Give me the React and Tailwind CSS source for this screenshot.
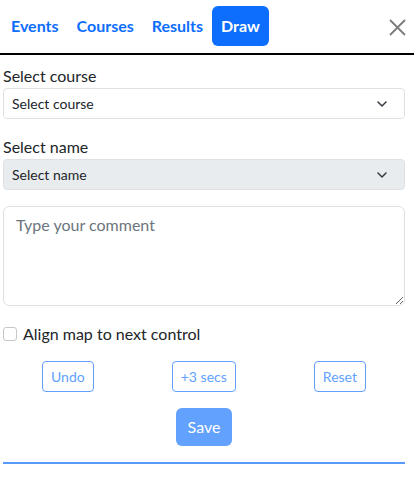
import React, { useState } from 'react'

// Draw panel: tabs on top, course/name selects, comment box and the draw controls

const tabs = ['Events', 'Courses', 'Results', 'Draw']

const Chevron = () => (
  <svg width="10" height="6" viewBox="0 0 10 6" className="pointer-events-none absolute right-[18px] top-1/2 -translate-y-1/2">
    <path d="M1 1l4 4 4-4" fill="none" stroke="#343a40" strokeWidth="1.5" strokeLinecap="round" strokeLinejoin="round" />
  </svg>
)

export default function App() {
  const [tab, setTab] = useState('Draw')
  const [comment, setComment] = useState('')
  const [align, setAlign] = useState(false)

  return (
    <div className="w-[414px] min-h-[483px] bg-white text-[#212529]" style={{ fontFamily: 'Lato, "Noto Sans", sans-serif' }}>
      {/* tabs */}
      <div className="flex items-center pt-[6px] pb-[7px] pl-[2px] pr-[8px] border-b-2 border-black">
        {tabs.map(t => (
          <button
            key={t}
            onClick={() => setTab(t)}
            className={`h-[40px] px-[9px] rounded-md text-[16px] font-bold ${tab === t ? 'bg-[#0d6efd] text-white' : 'text-[#0d6efd]'}`}
          >
            {t}
          </button>
        ))}
        <button className="ml-auto w-[17px] h-[17px] mt-[2px]">
          <svg width="17" height="17" viewBox="0 0 17 17">
            <path d="M1 1l15 15M16 1L1 16" stroke="#7b7b7b" strokeWidth="1.8" />
          </svg>
        </button>
      </div>

      <div className="pl-[3px] pr-[9px] pt-[9px]">
        <label className="block text-[16px] leading-6">Select course</label>
        <div className="relative">
          <select className="w-full h-[31px] pl-2 pr-8 text-[14px] border border-[#dee2e6] rounded-[4px] bg-white appearance-none">
            <option>Select course</option>
          </select>
          <Chevron />
        </div>

        <label className="block text-[16px] leading-6 mt-4">Select name</label>
        <div className="relative">
          <select disabled className="w-full h-[31px] pl-2 pr-8 text-[14px] text-[#212529] border border-[#dee2e6] rounded-[4px] bg-[#e9ecef] appearance-none">
            <option>Select name</option>
          </select>
          <Chevron />
        </div>

        <textarea
          value={comment}
          onChange={e => setComment(e.target.value)}
          placeholder="Type your comment"
          className="block w-full h-[100px] mt-4 px-3 py-[6px] text-[16px] leading-6 border border-[#dee2e6] rounded-md placeholder:text-[#6c757d] outline-none"
        />

        <label className="flex items-center mt-4 h-6 text-[16px]">
          <input
            type="checkbox"
            checked={align}
            onChange={e => setAlign(e.target.checked)}
            className="appearance-none w-[14px] h-[14px] border border-[#c4c8cc] rounded-[3px] bg-white"
          />
          <span className="ml-[6px]">Align map to next control</span>
        </label>

        <div className="flex justify-around mt-[15px]">
          <button disabled className="h-[31px] px-2 text-[14px] text-[#62a1fe] border border-[#62a1fe] rounded-[4px]">Undo</button>
          <button disabled className="h-[31px] px-2 text-[14px] text-[#62a1fe] border border-[#62a1fe] rounded-[4px]">+3 secs</button>
          <button disabled className="h-[31px] px-2 text-[14px] text-[#62a1fe] border border-[#62a1fe] rounded-[4px]">Reset</button>
        </div>

        <div className="flex justify-center mt-4">
          <button disabled className="h-[38px] px-3 text-[16px] text-white bg-[#62a1fe] rounded-md">Save</button>
        </div>

        <div className="mt-4 border-b-2 border-[#579bfd]" />
      </div>
    </div>
  )
}
